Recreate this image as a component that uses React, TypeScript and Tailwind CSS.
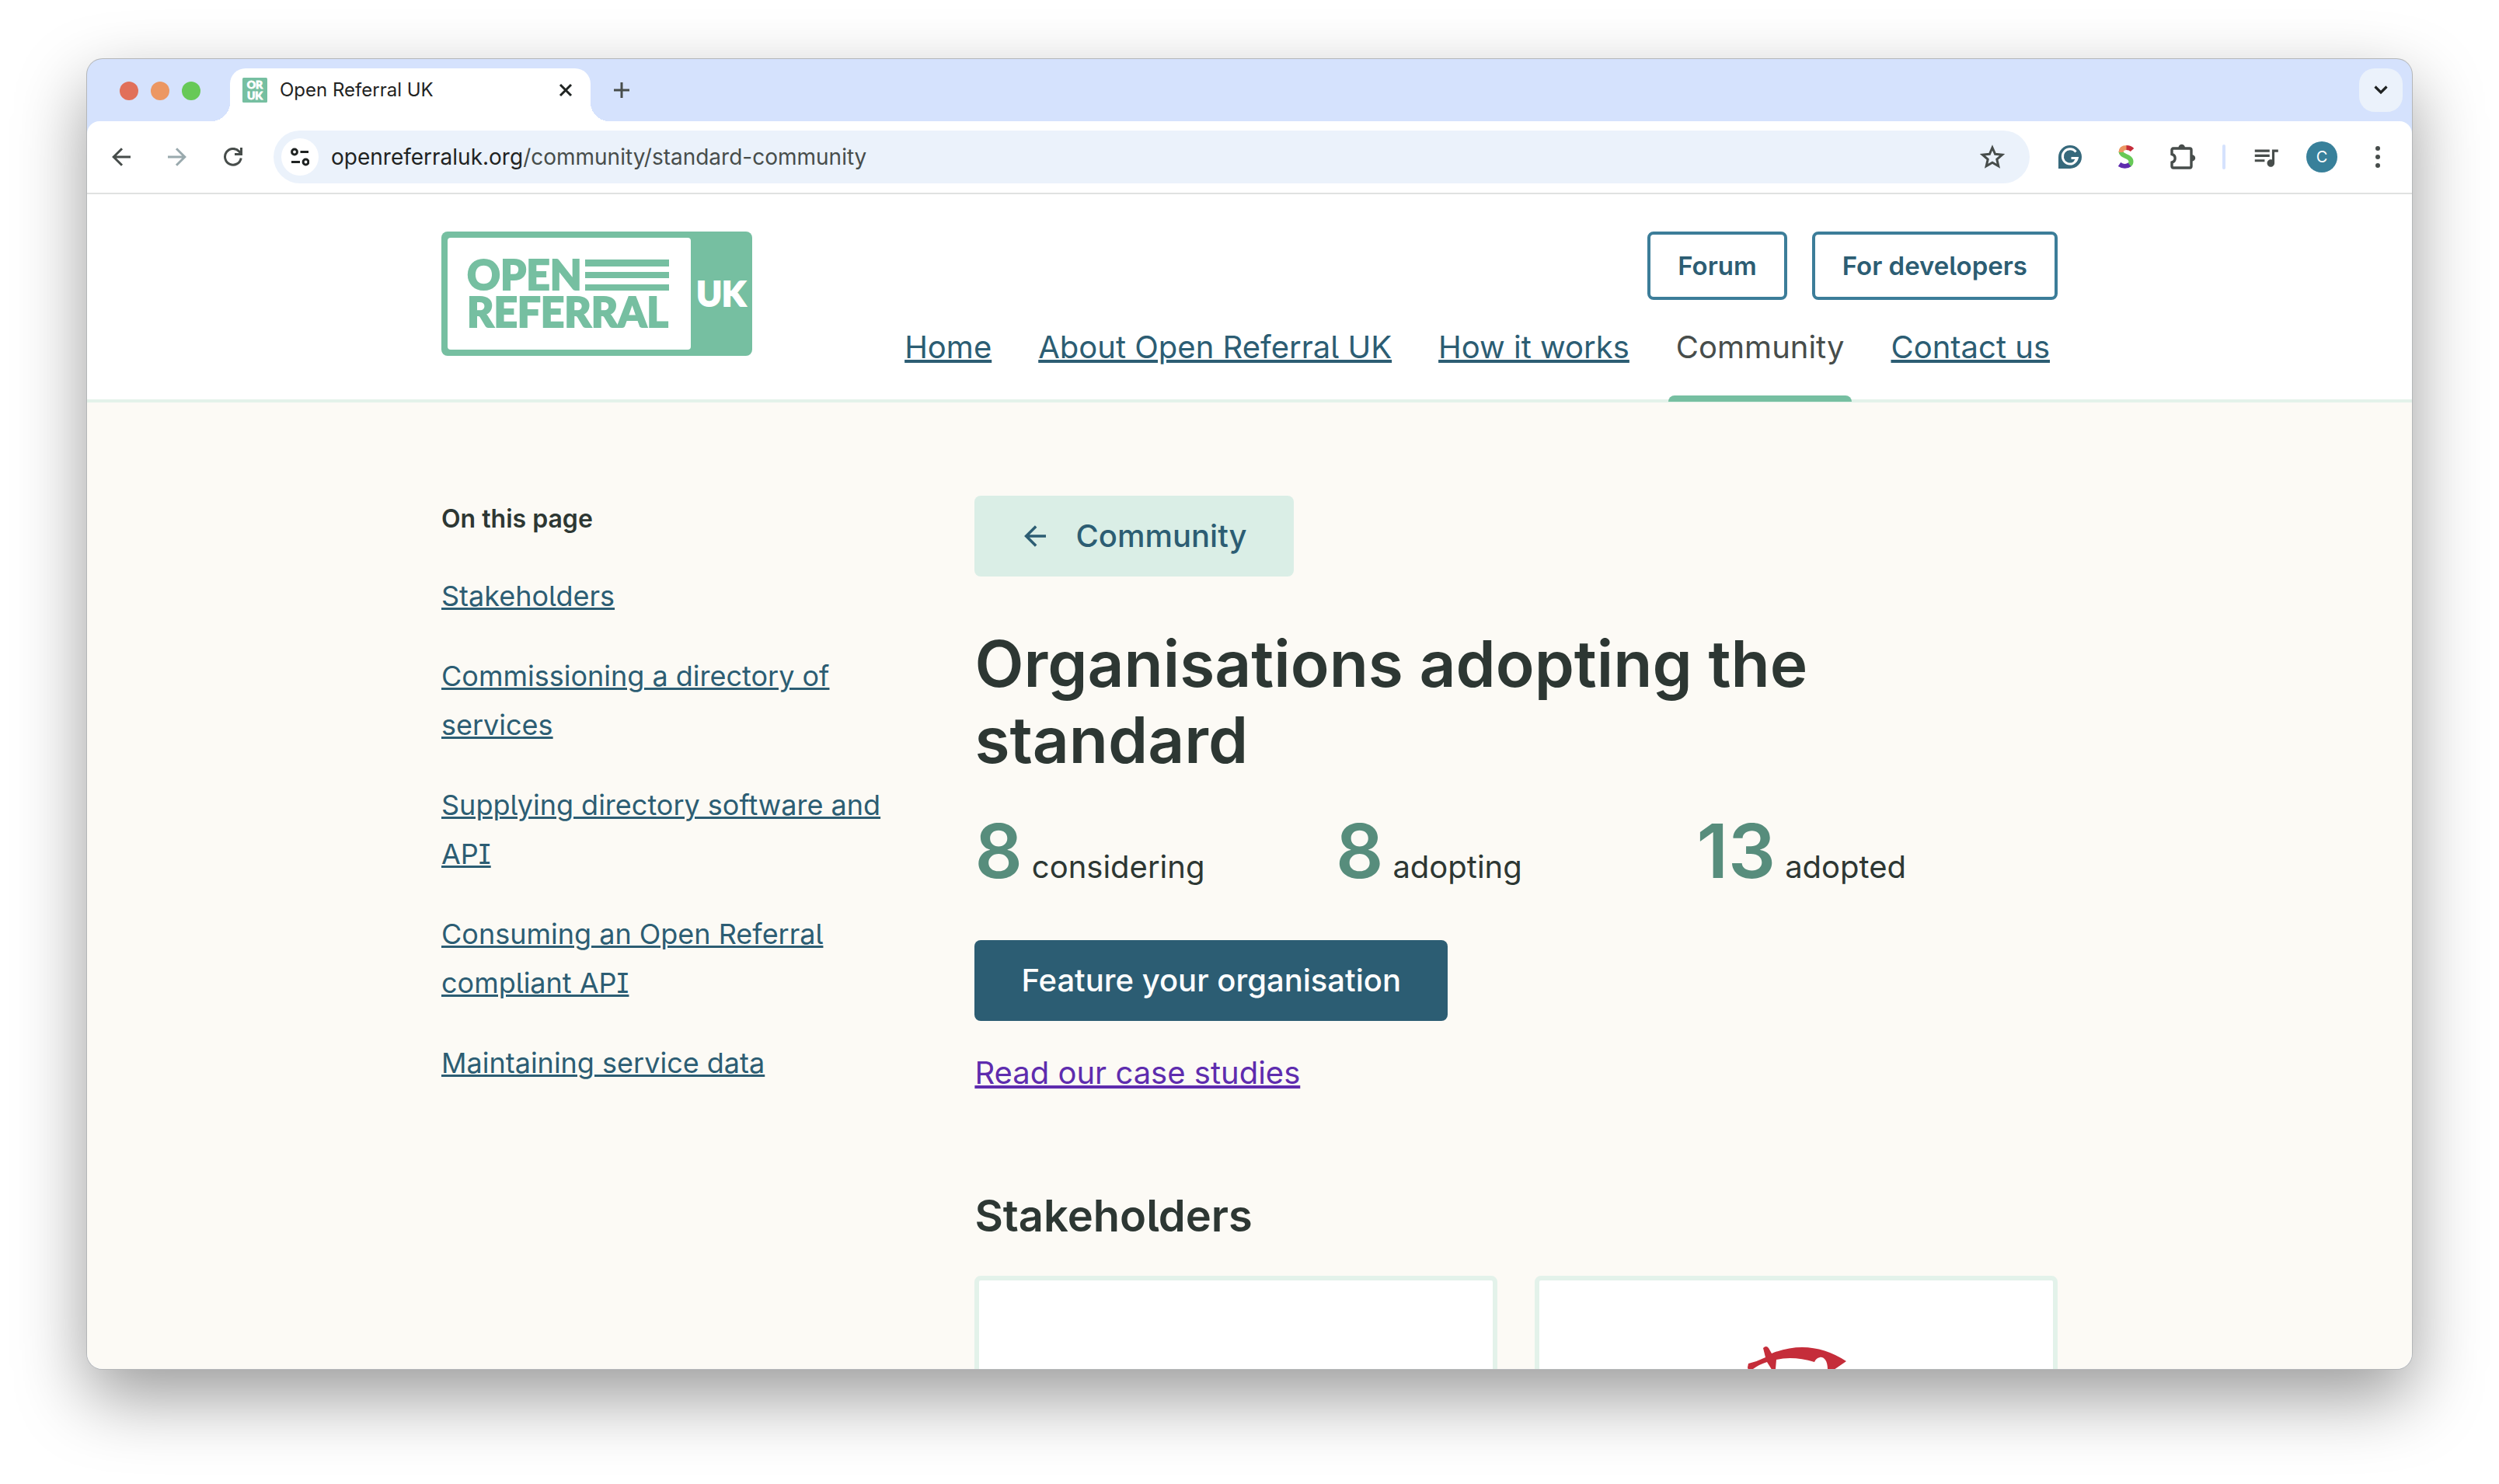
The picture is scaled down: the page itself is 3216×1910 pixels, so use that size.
import type { ReactNode } from 'react';
import { MdQueueMusic } from 'react-icons/md';

const NAV_LINKS = [
  { label: 'Home' },
  { label: 'About Open Referral UK' },
  { label: 'How it works' },
  { label: 'Community', active: true },
  { label: 'Contact us' },
];

const PAGE_LINKS = [
  'Stakeholders',
  'Commissioning a directory of services',
  'Supplying directory software and API',
  'Consuming an Open Referral compliant API',
  'Maintaining service data',
];

const STATS = [
  { count: 8, label: 'considering' },
  { count: 8, label: 'adopting' },
  { count: 13, label: 'adopted' },
];

function ToolbarButton({
  label,
  children,
}: {
  label: string;
  children: ReactNode;
}) {
  return (
    <button
      type="button"
      aria-label={label}
      className="flex h-[68px] w-[72px] shrink-0 items-center justify-center text-[#474d4b]"
    >
      {children}
    </button>
  );
}

function ArrowIcon({ className }: { className?: string }) {
  return (
    <svg
      className={className}
      viewBox="0 0 24 24"
      fill="none"
      stroke="currentColor"
      strokeWidth={3}
    >
      <path d="M24 12H2.5M13 1.2 2.2 12 13 22.8" />
    </svg>
  );
}

function Favicon() {
  return (
    <svg className="size-8 shrink-0" viewBox="0 0 32 32">
      <rect width="32" height="32" rx="1.5" fill="#76bfa1" />
      <g
        fill="#fff"
        stroke="#fff"
        strokeWidth="0.8"
        fontFamily="Lato, sans-serif"
        fontWeight="900"
        fontSize="14"
        textAnchor="middle"
      >
        <text x="16" y="14">OR</text>
        <text x="16" y="28">UK</text>
      </g>
    </svg>
  );
}

function TabStrip() {
  return (
    <div className="flex h-20 items-end">
      <div className="flex h-17 w-[184px] shrink-0 items-center gap-4 pb-[10px] pl-[42px]">
        <span className="size-6 rounded-full bg-[#e1705a]" />
        <span className="size-6 rounded-full bg-[#ec9762]" />
        <span className="size-6 rounded-full bg-[#67c957]" />
      </div>
      <div className="relative flex h-17 w-[464px] items-center rounded-t-[20px] bg-white pr-4 pb-3 pl-4 before:absolute before:bottom-0 before:-left-6 before:size-6 before:bg-[radial-gradient(circle_at_0_0,transparent_24px,#fff_24px)] after:absolute after:-right-6 after:bottom-0 after:size-6 after:bg-[radial-gradient(circle_at_100%_0,transparent_24px,#fff_24px)]">
        <Favicon />
        <span className="ml-4 flex-1 text-2xl text-[#1f2322]">
          Open Referral UK
        </span>
        <button type="button" aria-label="Close tab" className="p-1">
          <svg
            className="size-6"
            viewBox="0 0 24 24"
            stroke="#1f2322"
            strokeWidth={3}
          >
            <path d="M5 5l14 14M19 5L5 19" />
          </svg>
        </button>
      </div>
      <button type="button" aria-label="New tab" className="mb-6 ml-6 p-1">
        <svg
          className="size-6"
          viewBox="0 0 24 24"
          stroke="#474d4b"
          strokeWidth={3}
        >
          <path d="M12 2v20M2 12h20" />
        </svg>
      </button>
      <button
        type="button"
        aria-label="Search tabs"
        className="mr-3 mb-3 ml-auto flex size-14 items-center justify-center rounded-[20px] bg-[#ebf2fb]"
      >
        <svg
          className="size-6"
          viewBox="0 0 24 24"
          fill="none"
          stroke="#1f2322"
          strokeWidth={3.2}
        >
          <path d="M4.5 7.5 12 15l7.5-7.5" />
        </svg>
      </button>
    </div>
  );
}

function Toolbar() {
  return (
    <div className="flex items-center rounded-t-2xl border-b-2 border-[#e0e2e1] bg-white px-2 py-3">
      <ToolbarButton label="Back">
        <ArrowIcon className="size-6" />
      </ToolbarButton>
      <ToolbarButton label="Forward">
        <ArrowIcon className="size-6 rotate-180 text-[#9aaaae]" />
      </ToolbarButton>
      <ToolbarButton label="Reload">
        <svg className="size-6" viewBox="0 0 24 24" fill="none">
          <path
            d="M22.2 13.5A10.4 10.4 0 1 1 19.8 5L22 7.6"
            stroke="currentColor"
            strokeWidth={3}
          />
          <path d="M24 0v10H14V7h7V0z" fill="currentColor" />
        </svg>
      </ToolbarButton>

      <div className="mx-4 flex h-[68px] flex-1 items-center rounded-full bg-[#ebf2fb] pl-[10px]">
        <button
          type="button"
          aria-label="View site information"
          className="flex size-12 shrink-0 items-center justify-center rounded-full bg-white"
        >
          <svg
            className="size-6"
            viewBox="0 0 24 24"
            fill="none"
            stroke="#1f2322"
            strokeWidth={3}
          >
            <circle cx="5" cy="5.5" r="3.4" />
            <path d="M12.5 5.5H23M1 18.5h11" />
            <circle cx="19.5" cy="18.5" r="3.4" />
          </svg>
        </button>
        <p className="ml-4 flex-1 text-[28px] leading-9 text-[#474d4b]">
          <span className="text-[#1f2322]">openreferraluk.org</span>
          /community/standard-community
        </p>
        <button
          type="button"
          aria-label="Bookmark this tab"
          className="mr-8 text-[#474d4b]"
        >
          <svg
            className="size-8"
            viewBox="0 0 32 32"
            fill="none"
            stroke="currentColor"
            strokeWidth={3}
          >
            <path d="M16 4l3.6 8.3 9 .8-6.8 5.9 2 8.8L16 23.2l-7.8 4.6 2-8.8-6.8-5.9 9-.8z" />
          </svg>
        </button>
      </div>

      <ToolbarButton label="Grammarly">
        <svg className="size-8" viewBox="0 0 32 32">
          <path d="M16 1a15 15 0 0 1 0 30H1V16A15 15 0 0 1 16 1z" fill="#36697c" />
          <path
            d="M23.5 9.5A9.6 9.6 0 1 0 25.3 17.5H17.5M25.3 17.5l-3.5 5"
            fill="none"
            stroke="#fff"
            strokeWidth={3}
          />
        </svg>
      </ToolbarButton>
      <ToolbarButton label="Scribe">
        <svg className="size-8" viewBox="0 0 32 32" fill="none" strokeWidth={6}>
          <path
            d="M9.5 9C9.5 16 22.5 14 22.5 22c0 2-1 3.5-2.5 4.5"
            stroke="#67c957"
          />
          <path d="M17 4C12 4 9.5 6 9.5 10" stroke="#ec9762" />
          <path d="M24 7C22 4.7 19.5 4 16.5 4" stroke="#c52d3a" />
          <path d="M20.5 25.8C17 28.6 12 28.5 7.5 25.5" stroke="#5e2cae" />
        </svg>
      </ToolbarButton>
      <ToolbarButton label="Extensions">
        <svg className="size-9" viewBox="0 0 36 36" fill="none">
          <path
            d="M5 9q0-2 2-2h21q2 0 2 2v21q0 2-2 2H7q-2 0-2-2v-5c5.5-1.5 5.5-9 0-10.5z"
            stroke="currentColor"
            strokeWidth={3.4}
          />
          <path
            d="M13.5 6a4.2 4.2 0 0 1 8.4 0zM31 15.2a4.2 4.2 0 0 1 0 8.4z"
            fill="currentColor"
          />
        </svg>
      </ToolbarButton>
      <span className="mx-4 h-8 w-1 rounded-full bg-[#d5e2fd]" />
      <ToolbarButton label="Media controls">
        <MdQueueMusic className="size-[38px]" />
      </ToolbarButton>
      <ToolbarButton label="Profile">
        <span className="flex size-10 items-center justify-center rounded-full bg-[#38809a] text-xl text-white">
          C
        </span>
      </ToolbarButton>
      <ToolbarButton label="More">
        <svg className="size-8" viewBox="0 0 32 32" fill="currentColor">
          <circle cx="16" cy="5" r="3" />
          <circle cx="16" cy="16" r="3" />
          <circle cx="16" cy="27" r="3" />
        </svg>
      </ToolbarButton>
    </div>
  );
}

function Logo() {
  return (
    <svg
      className="h-40 w-[400px]"
      viewBox="0 0 400 160"
      role="img"
      aria-label="Open Referral UK"
    >
      <rect width="400" height="160" rx="8" fill="#76bfa1" />
      <rect x="8" y="8" width="313" height="144" rx="4" fill="#fff" />
      <g fontFamily="Lato, sans-serif" fontWeight="900" strokeWidth="2">
        <g fill="#76bfa1" stroke="#76bfa1" fontSize="53">
          <text x="33" y="75">OPEN</text>
          <text x="33" y="123">REFERRAL</text>
        </g>
        <text
          x="360"
          y="96"
          fill="#fff"
          stroke="#fff"
          fontSize="44"
          textAnchor="middle"
        >
          UK
        </text>
      </g>
      <path d="M185 36h108v9H185zM185 52h108v8H185zM185 68h108v8H185z" fill="#76bfa1" />
    </svg>
  );
}

function Header() {
  return (
    <header className="border-b-4 border-[#e3f2ea] bg-white">
      <div className="mx-auto flex max-w-[2080px] items-start justify-between pt-12">
        <a href="#home">
          <Logo />
        </a>
        <div className="flex flex-col items-end">
          <div className="flex gap-8">
            {['Forum', 'For developers'].map((label) => (
              <a
                key={label}
                href="#more"
                className="rounded-lg border-4 border-[#3c7d99] px-[35px] py-4 text-[33px] leading-12 font-semibold text-[#2c5d73]"
              >
                {label}
              </a>
            ))}
          </div>
          <nav className="mt-[31px] -mb-[3px] flex gap-10">
            {NAV_LINKS.map(({ label, active }) => (
              <div key={label}>
                <a
                  href="#nav"
                  className={
                    active
                      ? 'px-[10px] text-[40px] leading-[60px] text-[#474d4b]'
                      : 'mx-[10px] text-[40px] leading-[60px] text-[#2c5d73] underline decoration-4'
                  }
                >
                  {label}
                </a>
                {active && (
                  <div className="mt-8 h-2 rounded-t-lg bg-[#76bfa1]" />
                )}
              </div>
            ))}
          </nav>
        </div>
      </div>
    </header>
  );
}

function Sidebar() {
  return (
    <aside className="pt-[6px] pr-20">
      <h2 className="text-[32px] leading-12 font-semibold text-[#2d3733]">
        On this page
      </h2>
      <ul className="mt-11 flex flex-col gap-10">
        {PAGE_LINKS.map((link) => (
          <li key={link} className="text-4xl leading-[63px]">
            <a href="#section" className="text-[#2c5d73] underline decoration-3">
              {link}
            </a>
          </li>
        ))}
      </ul>
    </aside>
  );
}

function StakeholderCard({ children }: { children?: ReactNode }) {
  return (
    <div className="flex h-96 justify-center rounded-lg border-6 border-[#e3f2ea] bg-white pt-[84px]">
      {children}
    </div>
  );
}

export default function App() {
  return (
    <div className="h-screen bg-white px-28 pt-[76px] pb-[148px] font-[Inter,'Liberation_Sans',sans-serif]">
      <div className="flex h-full flex-col overflow-hidden rounded-[20px] bg-[#d5e2fd] shadow-[0_0_0_1px_#b4b6b8,0_36px_90px_rgba(0,0,0,0.4)]">
        <TabStrip />
        <Toolbar />
        <div className="min-h-0 flex-1 overflow-hidden bg-[#fcfaf5] [font-feature-settings:'cv05','cv08']">
          <Header />
          <div className="mx-auto grid max-w-[2080px] grid-cols-[33%_67%] pt-30">
            <Sidebar />
            <main className="text-[40px] leading-[60px] text-[#2d3733]">
              <a
                href="#community"
                className="inline-flex items-center gap-[34px] rounded-lg bg-[#daeee6] px-15 py-[22px] font-medium text-[#2c5d73]"
              >
                <ArrowIcon className="size-9 p-1" />
                Community
              </a>
              <h1 className="mt-16 text-[82px] leading-[98px] font-semibold">
                Organisations adopting the standard
              </h1>
              <ul className="mt-[45px] grid grid-cols-3">
                {STATS.map(({ count, label }) => (
                  <li key={label} className="flex items-baseline gap-3">
                    <strong className="text-8xl leading-24 font-semibold text-[#578d7c]">
                      {count}
                    </strong>
                    {label}
                  </li>
                ))}
              </ul>
              <button
                type="button"
                className="mt-16 block rounded-lg bg-[#2c5d73] px-15 py-[22px] font-medium text-white"
              >
                Feature your organisation
              </button>
              <p className="mt-[37px]">
                <a href="#studies" className="text-[#5e2cae] underline decoration-4">
                  Read our case studies
                </a>
              </p>
              <h2 className="mt-30 text-[56px] leading-17 font-semibold">
                Stakeholders
              </h2>
              <div className="mt-[43px] grid grid-cols-2 gap-12">
                <StakeholderCard />
                <StakeholderCard>
                  <svg className="h-16 w-32" viewBox="0 0 128 64" fill="#c52d3a">
                    <path d="M2 23 Q14 20 24 15 L21 3 Q25-1 28 3 L32 10 Q82-10 128 20 L112 31 Q108 36 104 30 C104 18 98 14 94 15 Q89 16 87 21 Q60 13 38 18 L37 30 Q35 36 31 29 L26 21 Q16 24 8 30 Q2 34 1 28z" />
                  </svg>
                </StakeholderCard>
              </div>
            </main>
          </div>
        </div>
      </div>
    </div>
  );
}
